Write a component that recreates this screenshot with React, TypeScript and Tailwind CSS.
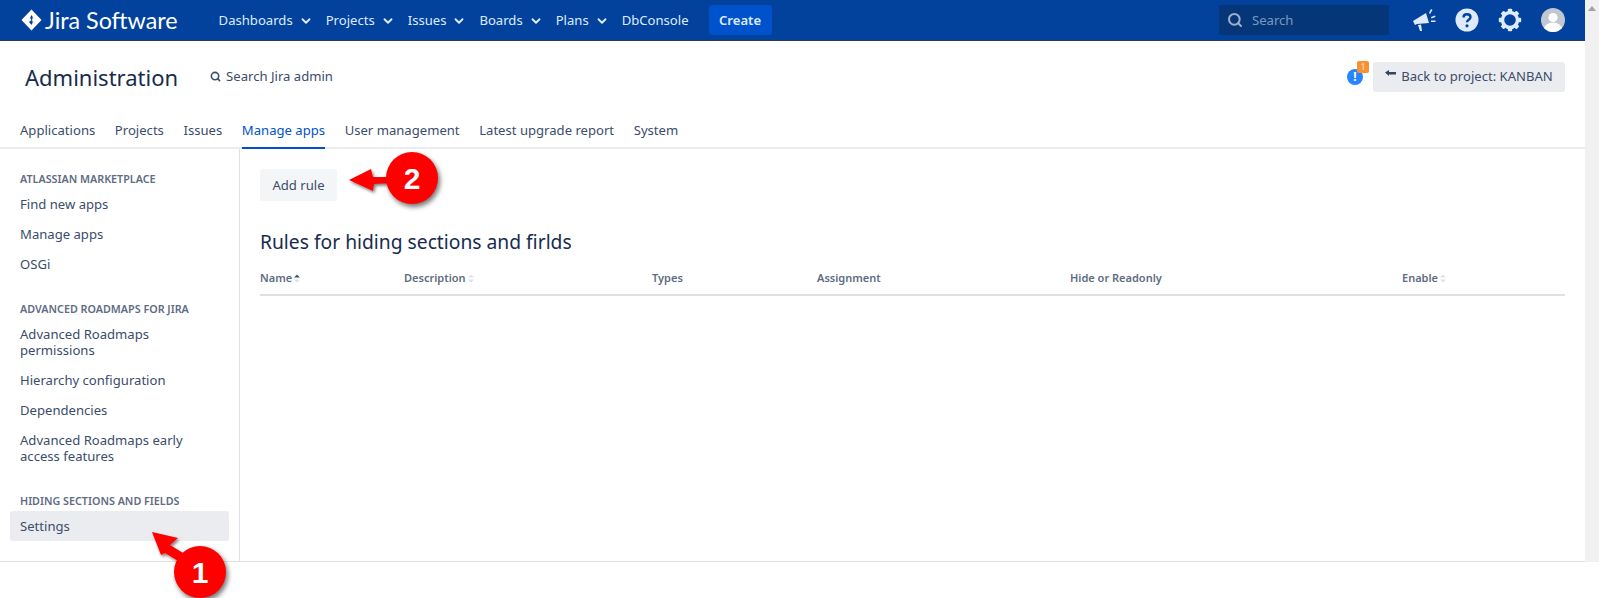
import { ChevronDown, Search } from "lucide-react";

const font = { fontFamily: '"Noto Sans", sans-serif' };

const navItems = [
  { label: "Dashboards", menu: true },
  { label: "Projects", menu: true },
  { label: "Issues", menu: true },
  { label: "Boards", menu: true },
  { label: "Plans", menu: true },
  { label: "DbConsole", menu: false },
];

const tabs = [
  "Applications",
  "Projects",
  "Issues",
  "Manage apps",
  "User management",
  "Latest upgrade report",
  "System",
];

const sideGroups = [
  {
    title: "Atlassian Marketplace",
    items: ["Find new apps", "Manage apps", "OSGi"],
  },
  {
    title: "Advanced Roadmaps for Jira",
    items: [
      "Advanced Roadmaps permissions",
      "Hierarchy configuration",
      "Dependencies",
      "Advanced Roadmaps early access features",
    ],
  },
  {
    title: "Hiding sections and fields",
    items: ["Settings"],
  },
];

const JiraLogo = () => (
  <svg width="21" height="22" viewBox="0 0 21 22">
    <path d="M10.5 0.5 L20.5 11 L10.5 21.5 L0.5 11 Z" fill="#fff" />
    <path
      d="M10.5 6 C8.8 8.5 9 9.8 10.5 11 L15 15.5 L10.8 11 C12 9.6 12.2 8 10.5 6 Z"
      fill="#02429c"
    />
    <path d="M10.5 16 C12.2 13.5 12 12.2 10.5 11 L6.5 7.5 L10.5 11 L8 13 Z" fill="#02429c" />
  </svg>
);

const Megaphone = () => (
  <svg width="24" height="24" viewBox="0 0 24 24" fill="#deebff">
    <path d="M1 13 L14 5 L17 15 L5 16 L3 17 Z" />
    <path d="M6 17 L9 16.5 L10 23 L8 23 Z" />
    <path d="M17 5 L19 1 L20.5 2 L18 6 Z" />
    <path d="M19 9 L23 7.5 L23.5 9 L19.5 10.5 Z" />
    <path d="M19 12.5 L23.5 12.5 L23.5 14 L19 14 Z" />
  </svg>
);

const HelpIcon = () => (
  <svg width="24" height="24" viewBox="0 0 24 24">
    <circle cx="12" cy="12" r="11.5" fill="#deebff" />
    <path
      d="M8.5 9.5 C8.5 7.5 10 6.3 12 6.3 C14 6.3 15.5 7.6 15.5 9.3 C15.5 11.8 12 11.8 12 14.2"
      fill="none"
      stroke="#02429c"
      strokeWidth="2.4"
    />
    <circle cx="12" cy="17.8" r="1.6" fill="#02429c" />
  </svg>
);

const GearIcon = () => (
  <svg width="24" height="24" viewBox="0 0 24 24" fill="none">
    <circle cx="12" cy="12" r="7.5" stroke="#deebff" strokeWidth="3.4" />
    {[0, 45, 90, 135, 180, 225, 270, 315].map((deg) => (
      <rect
        key={deg}
        x="9.8"
        y="0.8"
        width="4.4"
        height="4.5"
        rx="1"
        fill="#deebff"
        transform={`rotate(${deg} 12 12)`}
      />
    ))}
  </svg>
);

const Avatar = () => (
  <svg width="24" height="24" viewBox="0 0 24 24">
    <defs>
      <clipPath id="avatar-clip">
        <circle cx="12" cy="12" r="12" />
      </clipPath>
    </defs>
    <g clipPath="url(#avatar-clip)">
      <rect width="24" height="24" fill="#c1c7d0" />
      <circle cx="12" cy="9.5" r="4.6" fill="#fff" />
      <ellipse cx="12" cy="21" rx="9" ry="6.5" fill="#fff" />
    </g>
  </svg>
);

const SortArrows = ({ up = false }: { up?: boolean }) => (
  <svg width="6" height="9" viewBox="0 0 6 9" className="ml-[2px]">
    <path d="M3 0.5 L6 3.5 H0 Z" fill={up ? "#42526e" : "#dfe1e6"} />
    <path d="M3 8.5 L6 5.5 H0 Z" fill="#dfe1e6" />
  </svg>
);

const Marker = ({
  number,
  className,
}: {
  number: string;
  className: string;
}) => (
  <div
    className={`absolute flex h-[52px] w-[52px] items-center justify-center rounded-full bg-[#ff0000] text-[30px] font-bold text-white shadow-[2px_3px_5px_rgba(0,0,0,0.55)] ${className}`}
    style={{ fontFamily: '"Liberation Sans", sans-serif' }}
  >
    {number}
  </div>
);

const Header = () => (
  <header className="flex h-[41px] shrink-0 items-center border-b border-[#2b3a55] bg-[#02429c] pl-[21px] pr-[20px] text-[13.1px] text-[#deebff]">
    <JiraLogo />
    <span
      className="ml-[3px] text-[23.3px] text-white"
      style={{ fontFamily: "Lato, sans-serif" }}
    >
      Jira Software
    </span>
    <nav className="ml-[41px] flex items-center pt-[2px]">
      {navItems.map((item) => (
        <div key={item.label} className="mr-[13px] flex items-center">
          <span>{item.label}</span>
          {item.menu && (
            <ChevronDown size={14} strokeWidth={3.2} className="ml-[6px]" />
          )}
        </div>
      ))}
    </nav>
    <button className="ml-[7px] h-[30px] w-[63px] rounded-[3px] bg-[#0052cc] pt-[1px] text-[13.1px] font-semibold text-[#deebff]">
      Create
    </button>
    <div className="ml-auto flex h-[30px] w-[170px] items-center rounded-[3px] bg-[#053778] pl-[8px] text-[#7a97c0]">
      <Search size={16} strokeWidth={3} className="text-[#9fb0c8]" />
      <span className="ml-[9px] pt-[2px]">Search</span>
    </div>
    <div className="ml-[23px] flex items-center gap-[19px]">
      <Megaphone />
      <HelpIcon />
      <GearIcon />
      <Avatar />
    </div>
  </header>
);

const PageTitle = () => (
  <div className="flex h-[70px] items-center pl-[25px] pr-[20px] pt-[1px]">
    <h1 className="text-[22px] leading-[28px] text-[#172b4d]">
      Administration
    </h1>
    <div className="ml-[32px] flex items-center text-[13.1px] text-[#3b4d6b]">
      <Search size={11} strokeWidth={3.5} />
      <span className="ml-[5px]">Search Jira admin</span>
    </div>
    <div className="relative ml-auto mr-[10px] h-[16px] w-[16px] rounded-full bg-[#2684ff] text-center text-[12px] font-bold leading-[16px] text-white">
      !
      <span className="absolute left-[10px] top-[-8px] h-[12px] w-[12px] rounded-[2px] bg-[#f79232] text-[9px] font-normal leading-[12px] text-[#ffe9c9]">
        1
      </span>
    </div>
    <button className="flex h-[30px] w-[192px] items-center justify-center rounded-[3px] bg-[#ebecf0] text-[13.1px] text-[#3b4d6b]">
      <svg width="11" height="8" viewBox="0 0 11 8" className="mb-[6px] mr-[5px]">
        <path d="M0 2.5 L4 0 V2 H11 V4.5 H4 V6 Z" fill="#344563" />
      </svg>
      Back to project: KANBAN
    </button>
  </div>
);

const Tabs = () => (
  <div className="flex h-[38px] gap-[19.6px] border-b-2 border-[#ebecf0] pl-[20px] text-[13.1px] text-[#3b4d6b]">
    {tabs.map((tab) => (
      <div
        key={tab}
        className={
          tab === "Manage apps"
            ? "mb-[-2px] flex items-center border-b-2 border-[#0052cc] pt-[4px] text-[#0052cc]"
            : "flex items-center pt-[4px]"
        }
      >
        {tab}
      </div>
    ))}
  </div>
);

const Sidebar = () => (
  <aside className="w-[240px] shrink-0 border-r border-[#dfe1e6] px-[10px]">
    {sideGroups.map((group) => (
      <div key={group.title} className="mt-[22px]">
        <h3 className="pl-[10px] text-[10.75px] font-semibold uppercase leading-[16px] text-[#5e6c84]">
          {group.title}
        </h3>
        <ul className="mt-[2px]">
          {group.items.map((item) => (
            <li
              key={item}
              className={
                item === "Settings"
                  ? "rounded-[3px] bg-[#ebecf0] px-[10px] py-[7px] text-[13.1px] leading-[16px] text-[#3b4d6b]"
                  : "px-[10px] py-[7px] text-[13.1px] leading-[16px] text-[#3b4d6b]"
              }
            >
              {item}
            </li>
          ))}
        </ul>
      </div>
    ))}
  </aside>
);

const RulesPanel = () => (
  <main className="min-w-0 flex-1 pl-[20px] pr-[20px] pt-[20px]">
    <button className="h-[32px] w-[77px] rounded-[3px] bg-[#f4f5f7] pt-[2px] text-[13.1px] text-[#3b4d6b]">
      Add rule
    </button>
    <h2 className="mt-[27px] text-[19.25px] leading-[28px] text-[#172b4d]">
      Rules for hiding sections and firlds
    </h2>
    <div className="mt-[9px] grid h-[31px] grid-cols-[144px_248px_165px_253px_332px_1fr] items-center border-b-2 border-[#dfe1e6] pb-[2px] text-[11px] font-semibold text-[#5e6c84]">
      <div className="flex items-center">
        Name
        <SortArrows up />
      </div>
      <div className="flex items-center">
        Description
        <SortArrows />
      </div>
      <div>Types</div>
      <div>Assignment</div>
      <div>Hide or Readonly</div>
      <div className="flex items-center">
        Enable
        <SortArrows />
      </div>
    </div>
  </main>
);

const Scrollbar = () => (
  <div className="flex h-[562px] w-[14px] shrink-0 justify-center bg-[#f1f1f1] pt-[6px]">
    <svg width="8" height="5" viewBox="0 0 8 5">
      <path d="M4 0 L8 5 H0 Z" fill="#a3a3a3" />
    </svg>
  </div>
);

const Annotations = () => (
  <>
    <svg
      width="1585"
      height="598"
      viewBox="0 0 1585 598"
      className="pointer-events-none absolute left-0 top-0"
    >
      <defs>
        <filter id="arrow-shadow" x="-30%" y="-30%" width="160%" height="160%">
          <feDropShadow dx="1.5" dy="2" stdDeviation="1.5" floodOpacity="0.5" />
        </filter>
      </defs>
      <g filter="url(#arrow-shadow)" fill="#ff0000">
        <path d="M349 180 L371 169 L373 177 L395 177 L395 183 L374 184 L373 191 Z" />
        <path d="M152 532 L178 538 L170 545 L188 556 L183 564 L165 553 L161 555 Z" />
      </g>
    </svg>
    <Marker number="2" className="left-[386px] top-[152px]" />
    <Marker number="1" className="left-[174px] top-[546px]" />
  </>
);

export default function App() {
  return (
    <div
      className="relative flex h-[598px] w-[1599px] overflow-hidden bg-white"
      style={font}
    >
      <div className="flex min-w-0 flex-1 flex-col">
        <Header />
        <PageTitle />
        <Tabs />
        <div className="flex h-[413px] border-b border-[#dfe1e6]">
          <Sidebar />
          <RulesPanel />
        </div>
      </div>
      <Scrollbar />
      <Annotations />
    </div>
  );
}
